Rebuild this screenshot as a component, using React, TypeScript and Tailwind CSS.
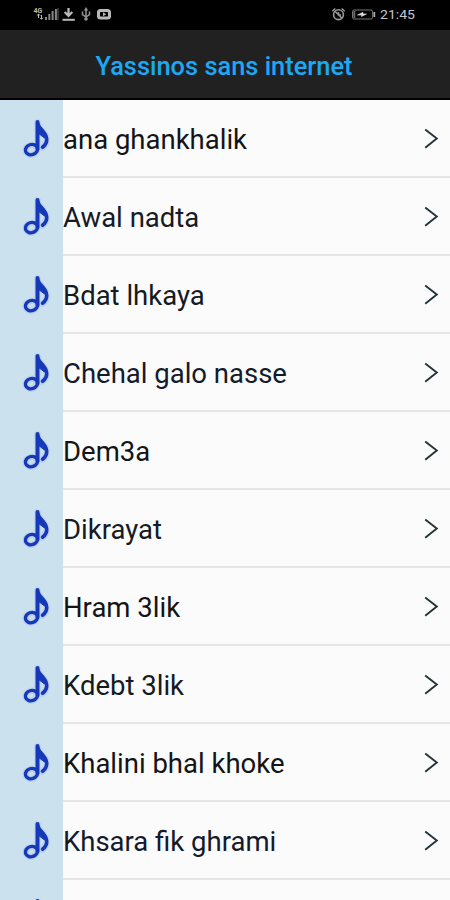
const songs = [
  { title: "ana ghankhalik", color: "#141416" },
  { title: "Awal nadta", color: "#141a26" },
  { title: "Bdat lhkaya", color: "#141a22" },
  { title: "Chehal galo nasse", color: "#141a2c" },
  { title: "Dem3a", color: "#141416" },
  { title: "Dikrayat", color: "#141a26" },
  { title: "Hram 3lik", color: "#141416" },
  { title: "Kdebt 3lik", color: "#141a22" },
  { title: "Khalini bhal khoke", color: "#141416" },
  { title: "Khsara fik ghrami", color: "#141a2c" },
];

function Note() {
  return (
    <svg width="30" height="42" viewBox="0 0 30 42" fill="none" stroke="#1539b8" strokeLinecap="round" strokeLinejoin="round" className="block">
      <g stroke="#b5c8f0" strokeWidth="6.5" opacity="0.6">
        <path d="M16.5 4.5V31" />
        <path d="M17 6C18 12 25 14.5 25.6 21C25.8 24.5 24.2 27.5 21.5 29.5" />
        <ellipse cx="10.3" cy="31.8" rx="5.8" ry="4.8" transform="rotate(-18 10.3 31.8)" />
      </g>
      <path d="M16.5 4V31" strokeWidth="4" />
      <path d="M17 6C18 11.5 25.2 13.5 25.7 21C25.9 24.5 24.2 27.3 21.5 29.3" strokeWidth="3.6" />
      <path d="M17 7L24 16L23.5 20L17 15Z" fill="#1539b8" strokeWidth="1" />
      <ellipse cx="10.5" cy="31.6" rx="6.2" ry="5.1" strokeWidth="3.4" transform="rotate(-18 10.5 31.6)" />
    </svg>
  );
}

function StatusBar() {
  return (
    <div className="flex h-[30px] shrink-0 items-start justify-between bg-black pl-[32px] pr-[34px] text-[#b9b9b9]">
      <svg width="82" height="28" viewBox="32 0 82 28" fill="none" stroke="currentColor">
        <text x="33.5" y="13" fontSize="7" fontWeight="700" fill="currentColor" stroke="none" className="font-['Roboto',sans-serif]">4G</text>
        <path d="M38.5 14V18M36.8 15.7L38.5 14L40.2 15.7M41.5 15V19M40 17.8L41.5 19.3L43 17.8" />
        <path d="M46 17V20M49.3 14V20M52.6 11V20M55.9 9V20" stroke="#858585" strokeWidth="2" />
        <path d="M58 8V20" stroke="#606060" strokeWidth="1" />
        <path d="M68.5 8V16M64.7 12L68.5 15.8L72.3 12" strokeWidth="2.3" />
        <path d="M62.5 19.8H74.8" strokeWidth="2" />
        <path d="M86 9V20M82.5 11.5V14.5L86 17L89.5 14.5V11.5" stroke="#929292" strokeWidth="1.5" />
        <path d="M86 7L83.8 10.5H88.2Z" fill="#929292" stroke="none" />
        <circle cx="86" cy="19" r="1.8" fill="#929292" stroke="none" />
        <rect x="98.5" y="10.5" width="11" height="7.5" rx="2" strokeWidth="3" />
        <path d="M103 12.3V16.3L106.2 14.3Z" fill="currentColor" stroke="none" />
      </svg>
      <svg width="88" height="28" viewBox="328 0 88 28" fill="none" stroke="currentColor">
        <circle cx="338.5" cy="14.7" r="4.9" stroke="#999" strokeWidth="1.6" />
        <path d="M332.3 11.3L335.3 8.5M341.7 8.5L344.7 11.3M335 11.2L342 18.2M338.5 12V15H341" stroke="#999" strokeWidth="1.5" />
        <rect x="352.5" y="10" width="20" height="9" rx="1.5" stroke="#777" />
        <path d="M354.3 11V18" stroke="#666" strokeWidth="2" />
        <path d="M357.5 15L363 12.2V14H366.5L361.5 16.5V15Z" fill="#ddd" stroke="#ddd" strokeWidth="0.6" />
        <path d="M374.3 12V17" stroke="#aaa" strokeWidth="1.8" />
        <text x="380" y="19" fontSize="13.5" textLength="35" lengthAdjust="spacingAndGlyphs" fill="#c4c4c4" stroke="none" className="font-['Roboto',sans-serif]">21:45</text>
      </svg>
    </div>
  );
}

export default function App() {
  return (
    <div className="flex h-[900px] w-[450px] flex-col overflow-hidden bg-[#fbfbfb] font-['Roboto',sans-serif]">
      <StatusBar />
      <header className="flex h-[70px] shrink-0 justify-center border-b-2 border-black bg-[#212121] pt-[16px] pr-[2px]">
        <h1 className="whitespace-nowrap text-[25.4px] font-medium leading-[40px] text-[#1da8f6]">Yassinos sans internet</h1>
      </header>
      <ul className="h-[800px] shrink-0 overflow-hidden">
        {songs.map((song) => (
          <li key={song.title} className="flex h-[78px]">
            <div className="w-[63px] bg-[#cbe1ed] pl-[21px] pt-[18px]">
              <Note />
            </div>
            <div className="flex flex-1 justify-between border-b-2 border-[#e6e6e6] pr-[10px] pt-[22px]">
              <span className="whitespace-nowrap text-[27.5px] leading-[36px]" style={{ color: song.color }}>
                {song.title}
              </span>
              <svg width="18" height="32" viewBox="0 0 18 32" fill="none" stroke="#263336" strokeWidth="1.9" className="block">
                <path d="M3.2 7.5L14.8 16.5L3.2 25.8" />
              </svg>
            </div>
          </li>
        ))}
        <li className="h-[78px] w-[63px] bg-[#cbe1ed] pl-[21px] pt-[17px]">
          <Note />
        </li>
      </ul>
    </div>
  );
}
